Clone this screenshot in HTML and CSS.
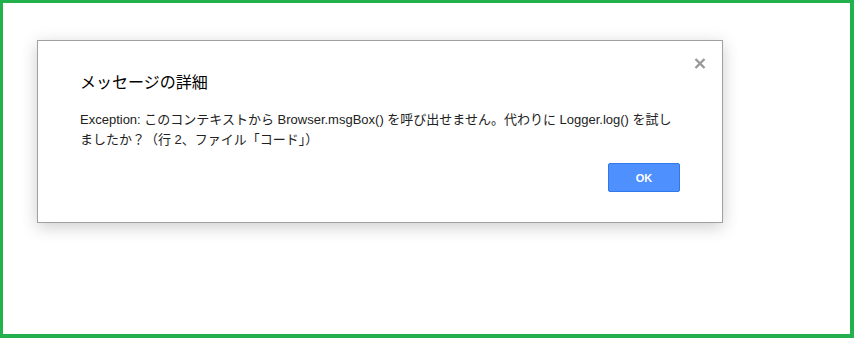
FILE: index.html
```html
<!DOCTYPE html>
<html>
<head>
	<title>メッセージの詳細</title>
	<link rel="stylesheet" href="styles.css">
</head>
<body>
	<div class="frame">
		<div class="dialog">
			<svg class="close" width="12" height="11" viewBox="0 0 12 11">
				<path d="M1.5 1 L10.5 10 M10.5 1 L1.5 10" stroke="#999" stroke-width="2.4" fill="none"/>
			</svg>
			<div class="title">メッセージの詳細</div>
			<div class="content">Exception: このコンテキストから Browser.msgBox() を呼び出せません。代わりに Logger.log() を試しましたか？（行 2、ファイル「コード」）</div>
			<div class="buttons">
				<button class="ok">OK</button>
			</div>
		</div>
	</div>
</body>
</html>
```
FILE: styles.css
```css
body {
	margin: 0;
	font-family: "Liberation Sans", "Noto Sans CJK JP", sans-serif;
	background: #fff;
}

.frame {
	box-sizing: border-box;
	height: 338px;
	border: solid #23b14d;
	border-width: 3px 4px 4px 3px;
	padding: 37px 0 0 34px;
}

.dialog {
	position: relative;
	box-sizing: border-box;
	width: 686px;
	border: 1px solid #a0a0a0;
	background: #fff;
	padding: 30px 42px 30px 42px;
	box-shadow: 0 4px 16px rgba(0, 0, 0, 0.2);
	color: #222;
}

.close {
	position: absolute;
	top: 17px;
	right: 16px;
}

.title {
	font-size: 16px;
	line-height: 24px;
	color: #000;
}

.content {
	margin-top: 15px;
	font-size: 13px;
	line-height: 20px;
	color: #222;
}

.buttons {
	display: flex;
	justify-content: flex-end;
	margin-top: 13px;
}

.ok {
	width: 72px;
	height: 29px;
	background: #4d90fe;
	border: 1px solid #3079ed;
	border-radius: 2px;
	color: #fff;
	font-family: "Liberation Sans", sans-serif;
	font-size: 11px;
	font-weight: bold;
	padding: 0;
}
```
